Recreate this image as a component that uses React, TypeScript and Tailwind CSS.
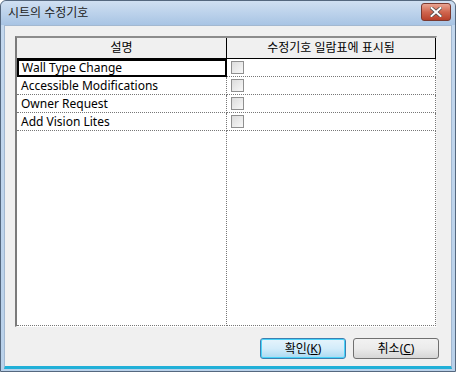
import React from 'react';

const rows = ['Wall Type Change', 'Accessible Modifications', 'Owner Request', 'Add Vision Lites'];

const Check = () => (
  <span className="block w-[13px] h-[13px] border border-[#8f8f8f] bg-gradient-to-br from-[#dcdcdc] to-[#f8f8f8]" />
);

export default function App() {
  return (
    <div
      className="w-[456px] h-[372px] flex flex-col bg-gradient-to-b from-[#c4d8ee] to-[#b9d1ea] border border-[#55687f] rounded-t-[6px] text-[12px] text-black"
      style={{ fontFamily: '"Noto Sans", "Noto Sans CJK KR", sans-serif' }}
    >
      {/* title bar */}
      <div className="h-[24px] flex items-center justify-between pl-[7px] pr-[4px] bg-gradient-to-b from-[#d0e0f2] to-[#a8c4e4] rounded-t-[6px]">
        <span className="text-[12px] text-[#1b1b1b] leading-none">시트의 수정기호</span>
        <div className="w-[30px] h-[18px] mt-[-2px] rounded-[3px] border border-[#7a3a31] bg-gradient-to-b from-[#e8a493] via-[#d0664f] to-[#b8402a] flex items-center justify-center">
          <svg width="12" height="10" viewBox="0 0 12 10">
            <path d="M1.5 1 L10.5 9 M10.5 1 L1.5 9" stroke="#4a4a4a" strokeWidth="3.4" strokeLinecap="square" />
            <path d="M1.5 1 L10.5 9 M10.5 1 L1.5 9" stroke="#ffffff" strokeWidth="2" strokeLinecap="square" />
          </svg>
        </div>
      </div>

      {/* client area */}
      <div className="flex-1 mx-[3px] mb-[2px] bg-[#f0f0f0] border border-[#a3b8d0] border-b-[3px] border-b-[#21b0d8] flex flex-col pt-[10px] pl-[10px] pr-[12px]">
        <div className="w-[422px] h-[291px] border-t-2 border-l-2 border-t-[#8c8c8c] border-l-[#7b7b7b] border-r border-b border-r-[#f4f4f4] border-b-[#ffffff] bg-white flex flex-col">
          <div className="grid grid-cols-[210px_209px] h-[21px] bg-[#f0f0f0] border-b border-black">
            <div className="flex items-center justify-center border-r border-black">설명</div>
            <div className="flex items-center justify-center border-r border-black">수정기호 일람표에 표시됨</div>
          </div>
          <div className="flex-1 grid grid-cols-[210px_209px] grid-rows-[repeat(4,18px)_1fr]">
            {rows.map((r, i) => (
              <React.Fragment key={r}>
                <div
                  className={
                    i === 0
                      ? 'flex items-center pl-[3px] border-2 border-black'
                      : 'flex items-center pl-[4px] border-b border-dotted border-[#777] border-r'
                  }
                >
                  {r}
                </div>
                <div className="flex items-center pl-[4px] border-b border-r border-dotted border-[#777]">
                  <Check />
                </div>
              </React.Fragment>
            ))}
            <div className="border-r border-b border-dotted border-[#777]" />
            <div className="border-r border-b border-dotted border-[#777]" />
          </div>
        </div>

        <div className="flex justify-end gap-[7px] mt-[11px]">
          <button className="w-[86px] h-[21px] rounded-[3px] border border-[#3c7fb1] shadow-[inset_0_0_0_1px_#48d3f9] bg-gradient-to-b from-[#e6f4fc] via-[#d3ecfa] to-[#a9d9f2] flex items-center justify-center leading-none">
            확인(<span className="underline">K</span>)
          </button>
          <button className="w-[86px] h-[21px] rounded-[3px] border border-[#707070] bg-gradient-to-b from-[#f2f2f2] via-[#ebebeb] to-[#d6d6d6] flex items-center justify-center leading-none">
            취소(<span className="underline">C</span>)
          </button>
        </div>
      </div>
    </div>
  );
}
